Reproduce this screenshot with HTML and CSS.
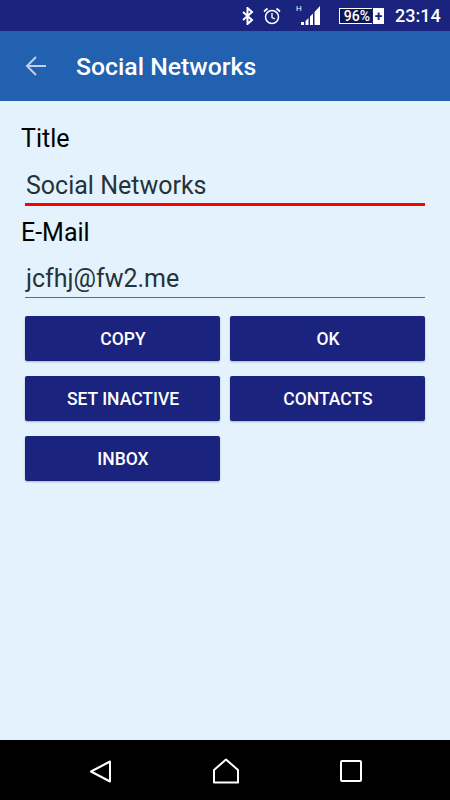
FILE: index.html
```html
<!DOCTYPE html>
<html lang="en">
<head>
    <meta charset="UTF-8">
    <meta name="viewport" content="width=device-width, initial-scale=1.0">
    <title>Social Networks</title>
    <link rel="stylesheet" href="styles.css">
</head>
<body>
    <div class="status-bar">
        <svg class="icon-bt" width="12" height="18" viewBox="0 0 12 18">
            <path d="M1 5l9 8-4.500 4V1L10 5l-9 8" fill="none" stroke="#fff" stroke-width="2"/>
        </svg>
        <svg class="icon-alarm" width="18" height="18" viewBox="0 0 18 18">
            <circle cx="9" cy="10" r="6.500" fill="none" stroke="#fff" stroke-width="1.500"/>
            <path d="M9 6v4.500l3 1.500" fill="none" stroke="#fff" stroke-width="1.300"/>
            <path d="M1 4.500L4.500 1.500M17 4.500L13.500 1.500" stroke="#fff" stroke-width="1.700"/>
        </svg>
        <div class="signal">
            <span class="signal-type">H</span>
            <svg width="20" height="20" viewBox="0 0 20 20">
                <path d="M0 20h3v-3H0zM4.500 20h3v-7l-3 3zM9 20h3V8.500l-3 3zM13.500 20H19V1l-5.500 6z" fill="#fff"/>
            </svg>
        </div>
        <div class="battery">
            <span class="battery-level">96%</span>
            <span class="battery-plus">+</span>
        </div>
        <span class="clock">23:14</span>
    </div>

    <div class="toolbar">
        <svg class="back" width="24" height="24" viewBox="0 0 24 24">
            <path d="M22 12H3M12 3l-9 9 9 9" fill="none" stroke="#c3cfe6" stroke-width="2"/>
        </svg>
        <h1>Social Networks</h1>
    </div>

    <div class="content">
        <label class="field-label">Title</label>
        <div class="field field-active">Social Networks</div>
        <label class="field-label field-label-mail">E-Mail</label>
        <div class="field">jcfhj@fw2.me</div>

        <div class="buttons">
            <button>Copy</button>
            <button>OK</button>
            <button>Set inactive</button>
            <button>Contacts</button>
            <button>Inbox</button>
        </div>
    </div>

    <div class="nav-bar">
        <svg width="24" height="24" viewBox="0 0 24 24">
            <path d="M21 2.500v20L2 12.500z" fill="none" stroke="#fff" stroke-width="2" stroke-linejoin="round"/>
        </svg>
        <svg class="nav-home" width="28" height="26" viewBox="0 0 28 26">
            <path d="M2 12L14 1.500 26 12v12.500H2z" fill="none" stroke="#fff" stroke-width="2" stroke-linejoin="round"/>
        </svg>
        <svg width="22" height="22" viewBox="0 0 22 22">
            <rect x="1" y="1" width="20" height="20" rx="1" fill="none" stroke="#fff" stroke-width="2"/>
        </svg>
    </div>
</body>
</html>
```

FILE: styles.css
```css
* {
    box-sizing: border-box;
}
body {
    font-family: Roboto, sans-serif;
    margin: 0;
    height: 800px;
    display: flex;
    flex-direction: column;
    background-color: #e3f2fd;
}

/* status bar */
.status-bar {
    height: 31px;
    flex-shrink: 0;
    display: flex;
    align-items: center;
    padding-left: 242px;
    background-color: #1a237e;
    color: #fff;
}
.icon-alarm {
    margin-left: 9px;
}
.signal {
    display: flex;
    align-items: flex-end;
    margin-left: 15px;
    height: 20px;
    margin-top: -1px;
}
.signal-type {
    font-size: 8px;
    line-height: 8px;
    align-self: flex-start;
    margin-right: -1px;
}
.battery {
    display: flex;
    align-items: center;
    margin-left: 18px;
    height: 16px;
}
.battery-level {
    font-size: 14px;
    font-weight: 500;
    line-height: 14px;
    padding: 0 2px 0 4px;
    border: 1px solid #fff;
    border-right-width: 0;
    background-color: #10164f;
}
.battery-plus {
    width: 11px;
    height: 16px;
    margin-left: 1px;
    background-color: #fff;
    color: #1a237e;
    font-size: 14px;
    font-weight: 700;
    line-height: 16px;
    text-align: center;
}
.clock {
    margin-left: 11px;
    font-size: 18px;
    font-weight: 500;
}

/* toolbar */
.toolbar {
    height: 70px;
    flex-shrink: 0;
    display: flex;
    align-items: center;
    padding-left: 24px;
    background-color: #2260b0;
}
.toolbar h1 {
    margin: 0 0 0 28px;
    font-size: 24.800px;
    font-weight: 500;
    color: #fff;
}

/* form */
.content {
    flex: 1;
    padding: 24px 25px 0;
}
.field-label {
    display: block;
    margin-left: -4px;
    font-size: 25px;
    line-height: 28px;
    color: #000;
}
.field-label-mail {
    margin-top: 13px;
    margin-bottom: -1px;
}
.field {
    height: 52px;
    padding: 19px 0 0 1px;
    font-size: 25px;
    line-height: 28px;
    color: #263238;
    border-bottom: 1px solid #5f6b7c;
}
.field-active {
    height: 53px;
    border-bottom: 3px solid #ff0000;
}
.buttons {
    display: grid;
    grid-template-columns: 195px 195px;
    column-gap: 10px;
    row-gap: 15px;
    margin-top: 18px;
}
.buttons button {
    height: 45px;
    padding: 0 0 0 1px;
    border: none;
    border-radius: 2px;
    background-color: #1a237e;
    color: #fff;
    font-family: Roboto, sans-serif;
    font-size: 17.500px;
    font-weight: 500;
    text-transform: uppercase;
    box-shadow: 0 1px 2px rgba(0,0,0,0.25);
}

/* navigation bar */
.nav-bar {
    height: 60px;
    flex-shrink: 0;
    display: flex;
    align-items: center;
    justify-content: space-between;
    padding: 2px 88px 0 89px;
    background-color: #000;
}
.nav-home {
    margin-right: 2px;
}
```
